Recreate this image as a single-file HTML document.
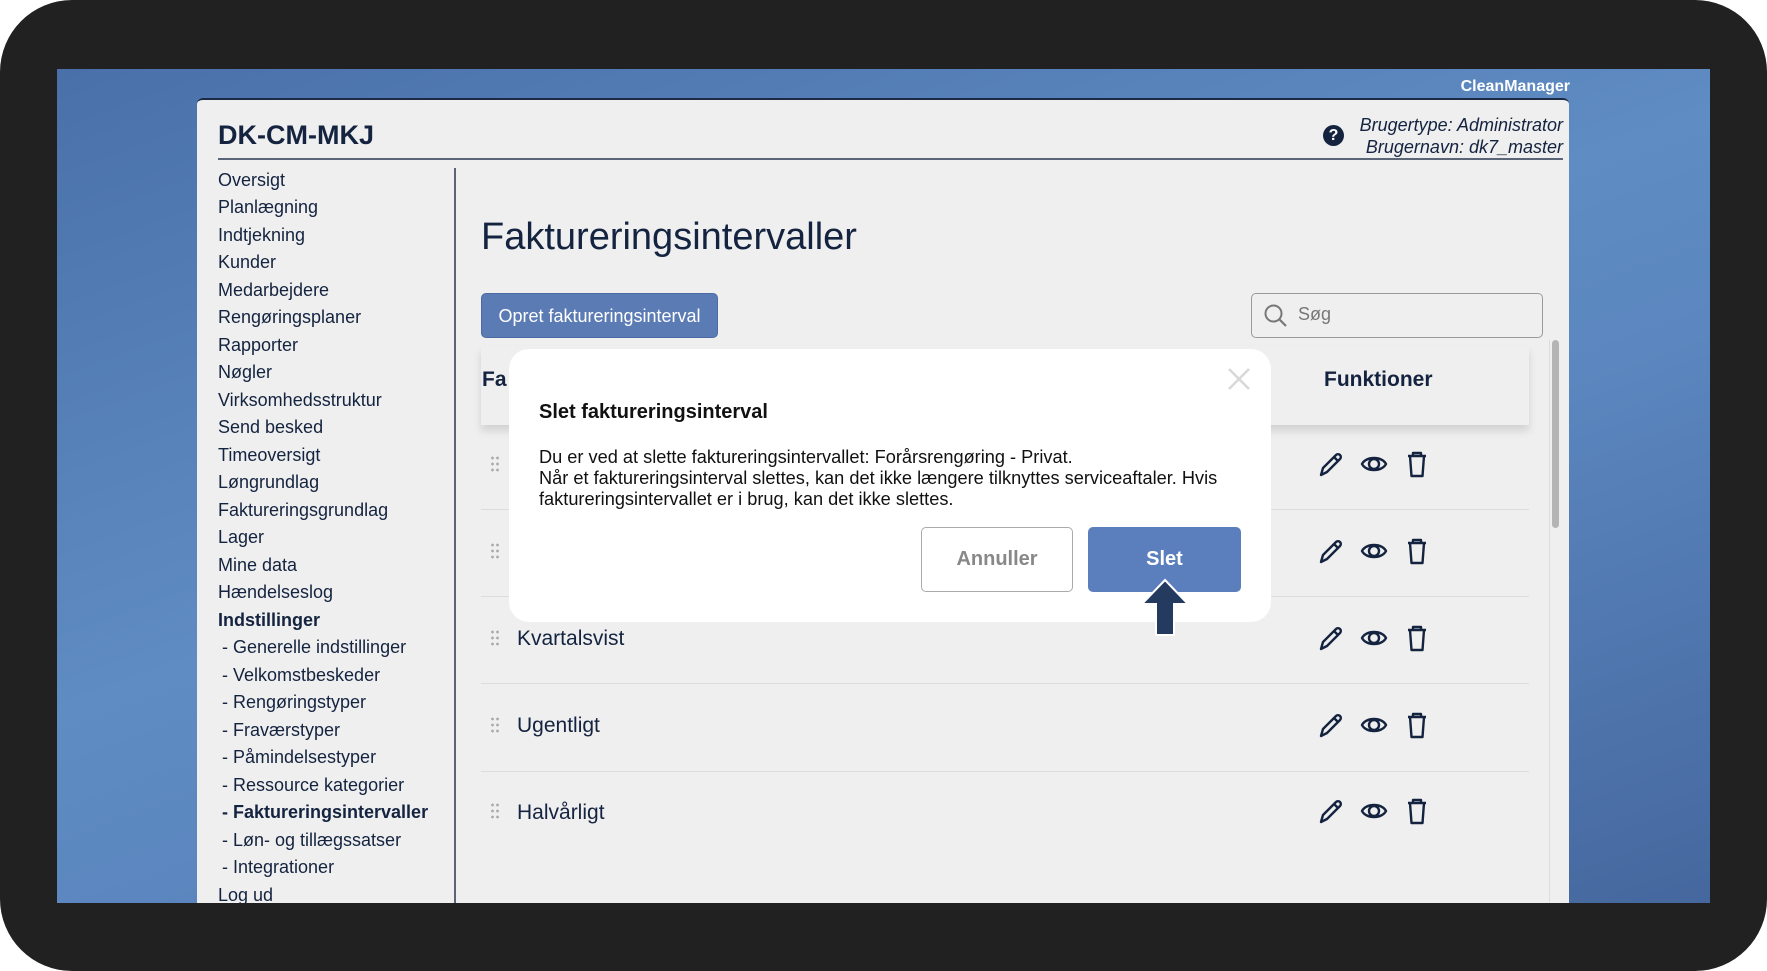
<!DOCTYPE html>
<html><head><meta charset="utf-8"><style>
*{margin:0;padding:0;box-sizing:border-box}
body{width:1767px;height:971px;background:#fff;font-family:"Liberation Sans",sans-serif;overflow:hidden;position:relative;color:#14233f}
.frame{position:absolute;left:0;top:0;width:1767px;height:971px;background:#222122;border-radius:72px}
.screen{position:absolute;left:57px;top:69px;width:1653px;height:834px;background:linear-gradient(160deg,#4a70a9 0%,#5f8cc3 45%,#5b86bf 60%,#45679e 100%);overflow:hidden}
.cm{position:absolute;right:140px;top:9px;color:#fff;font-weight:bold;font-size:16px}
.app{position:absolute;left:197px;top:98px;width:1372px;height:805px;background:#efefef;border-radius:6px 6px 0 0;border-top:2px solid #1c2a44;overflow:hidden}
.abs{position:absolute}
.nav div{position:absolute;left:21px;font-size:18px;color:#14233f;white-space:nowrap}
.row{position:absolute;left:284px;width:1048px;height:1px;background:#dcdcdc}
.ic{position:absolute}
</style></head><body>
<div class="frame"></div>
<div class="screen"><div class="cm">CleanManager</div></div>
<div class="app">
 <div class="abs" style="left:21px;top:20px;font-size:27px;font-weight:bold">DK-CM-MKJ</div>
 <div class="abs" style="right:6px;top:14px;text-align:right;font-style:italic;font-size:18px;line-height:22px">Brugertype: Administrator<br>Brugernavn: dk7_master</div>
 <div class="abs" style="left:1126px;top:25px;width:21px;height:21px;border-radius:50%;background:#14233f;color:#fff;font-weight:bold;font-size:16px;text-align:center;line-height:21px">?</div>
 <div class="abs" style="left:21px;top:58px;width:1345px;height:2px;background:#5a6578"></div>
 <div class="abs" style="left:257px;top:68px;width:2px;height:740px;background:#5a6578"></div>
 <div class="nav">
  <div style="top:70px">Oversigt</div><div style="top:97px">Planlægning</div><div style="top:125px">Indtjekning</div><div style="top:152px">Kunder</div><div style="top:180px">Medarbejdere</div><div style="top:207px">Rengøringsplaner</div><div style="top:235px">Rapporter</div><div style="top:262px">Nøgler</div><div style="top:290px">Virksomhedsstruktur</div><div style="top:317px">Send besked</div><div style="top:345px">Timeoversigt</div><div style="top:372px">Løngrundlag</div><div style="top:400px">Faktureringsgrundlag</div><div style="top:427px">Lager</div><div style="top:455px">Mine data</div><div style="top:482px">Hændelseslog</div><div style="top:510px;font-weight:bold">Indstillinger</div>
  <div style="top:537px;left:25px">- Generelle indstillinger</div><div style="top:565px;left:25px">- Velkomstbeskeder</div><div style="top:592px;left:25px">- Rengøringstyper</div><div style="top:620px;left:25px">- Fraværstyper</div><div style="top:647px;left:25px">- Påmindelsestyper</div><div style="top:675px;left:25px">- Ressource kategorier</div><div style="top:702px;left:25px;font-weight:bold">- Faktureringsintervaller</div><div style="top:730px;left:25px">- Løn- og tillægssatser</div><div style="top:757px;left:25px">- Integrationer</div><div style="top:785px">Log ud</div>
 </div>
 <div class="abs" style="left:284px;top:116px;font-size:38px">Faktureringsintervaller</div>
 <div class="abs" style="left:284px;top:193px;width:237px;height:45px;background:#5b7bb5;border-radius:5px;color:#fff;font-size:18px;line-height:45px;text-align:center;border:1px solid #4c6aa3">Opret faktureringsinterval</div>
 <div class="abs" style="left:1054px;top:193px;width:292px;height:45px;border:1.5px solid #9a9a9a;border-radius:5px"></div>
 <svg class="ic" style="left:1066px;top:203px" width="26" height="26" viewBox="0 0 26 26"><circle cx="10.5" cy="10.5" r="8" fill="none" stroke="#777" stroke-width="2"/><path d="M16 16l7 7" stroke="#777" stroke-width="2.2"/></svg>
 <div class="abs" style="left:1101px;top:204px;font-size:18px;color:#777">Søg</div>
 <div class="abs" style="left:284px;top:246px;width:1048px;height:79px;background:#efefef;box-shadow:0 6px 8px rgba(0,0,0,.12)"></div>
 <div class="abs" style="left:285px;top:268px;font-size:21px;font-weight:bold">Fa</div>
 <div class="abs" style="left:1127px;top:268px;font-size:21px;font-weight:bold">Funktioner</div>
 <div class="abs" style="left:1355px;top:240px;width:7px;height:188px;background:#b4b4b4;border-radius:4px"></div>
 <div class="abs" style="left:1352px;top:240px;width:1px;height:600px;background:#ddd"></div>
 <div class="row" style="top:409px"></div><div class="row" style="top:496px"></div><div class="row" style="top:583px"></div><div class="row" style="top:671px"></div>
 <div class="abs" style="left:320px;top:527px;font-size:21px">Kvartalsvist</div>
 <div class="abs" style="left:320px;top:614px;font-size:21px">Ugentligt</div>
 <div class="abs" style="left:320px;top:701px;font-size:21px">Halvårligt</div>
</div>
<div id="icons"></div>
<div class="abs" style="position:absolute;left:509px;top:349px;width:762px;height:273px;background:#fff;border-radius:20px"></div>
<svg style="position:absolute;left:1228px;top:368px" width="22" height="22"><path d="M1 1L21 21M21 1L1 21" stroke="#d8d8d8" stroke-width="2.5"/></svg>
<div style="position:absolute;left:539px;top:401px;font-size:20px;font-weight:bold;color:#111">Slet faktureringsinterval</div>
<div style="position:absolute;left:539px;top:447px;font-size:18.2px;line-height:21px;color:#111;width:710px">Du er ved at slette faktureringsintervallet: Forårsrengøring - Privat.<br>Når et faktureringsinterval slettes, kan det ikke længere tilknyttes serviceaftaler. Hvis faktureringsintervallet er i brug, kan det ikke slettes.</div>
<div style="position:absolute;left:921px;top:527px;width:152px;height:65px;border:1.5px solid #aaa;border-radius:5px;color:#888;font-weight:bold;font-size:20px;text-align:center;line-height:62px">Annuller</div>
<div style="position:absolute;left:1088px;top:527px;width:153px;height:65px;background:#5b7fbd;border-radius:5px;color:#fff;font-weight:bold;font-size:20px;text-align:center;line-height:65px">Slet</div>
<svg style="position:absolute;left:1139px;top:578px" width="52" height="60" viewBox="0 0 52 60"><path d="M26 2L49 26H35V57H17V26H3Z" fill="#243a5e" stroke="#fff" stroke-width="2"/></svg>
<script>
var ys=[464,551,638,725,811],h='';
ys.forEach(function(y){
h+='<div style="position:absolute;left:490px;top:'+(y-9)+'px;width:10px;height:18px;background:radial-gradient(circle,#aaa 1.2px,transparent 1.6px) 0 0/5px 6px"></div>';
h+='<svg style="position:absolute;left:1317px;top:'+(y-14)+'px" width="28" height="28" viewBox="0 0 28 28"><path d="M4 25l2-7L19 5a2.8 2.8 0 014 4L10 22z" fill="none" stroke="#14233f" stroke-width="2.4" stroke-linejoin="round"/><path d="M17 7l4 4" stroke="#14233f" stroke-width="2.4"/></svg>';
h+='<svg style="position:absolute;left:1360px;top:'+(y-12)+'px" width="28" height="24" viewBox="0 0 28 24"><path d="M2 12C6 4 22 4 26 12C22 20 6 20 2 12Z" fill="none" stroke="#14233f" stroke-width="2.4"/><circle cx="14" cy="12" r="5" fill="none" stroke="#14233f" stroke-width="2.4"/></svg>';
h+='<svg style="position:absolute;left:1405px;top:'+(y-14)+'px" width="24" height="28" viewBox="0 0 24 28"><path d="M3 6H21M8 6V3H16V6M5 6L6.5 26H17.5L19 6" fill="none" stroke="#14233f" stroke-width="2.4" stroke-linejoin="round"/></svg>';
});
document.getElementById('icons').innerHTML=h;
</script>
</body></html>
